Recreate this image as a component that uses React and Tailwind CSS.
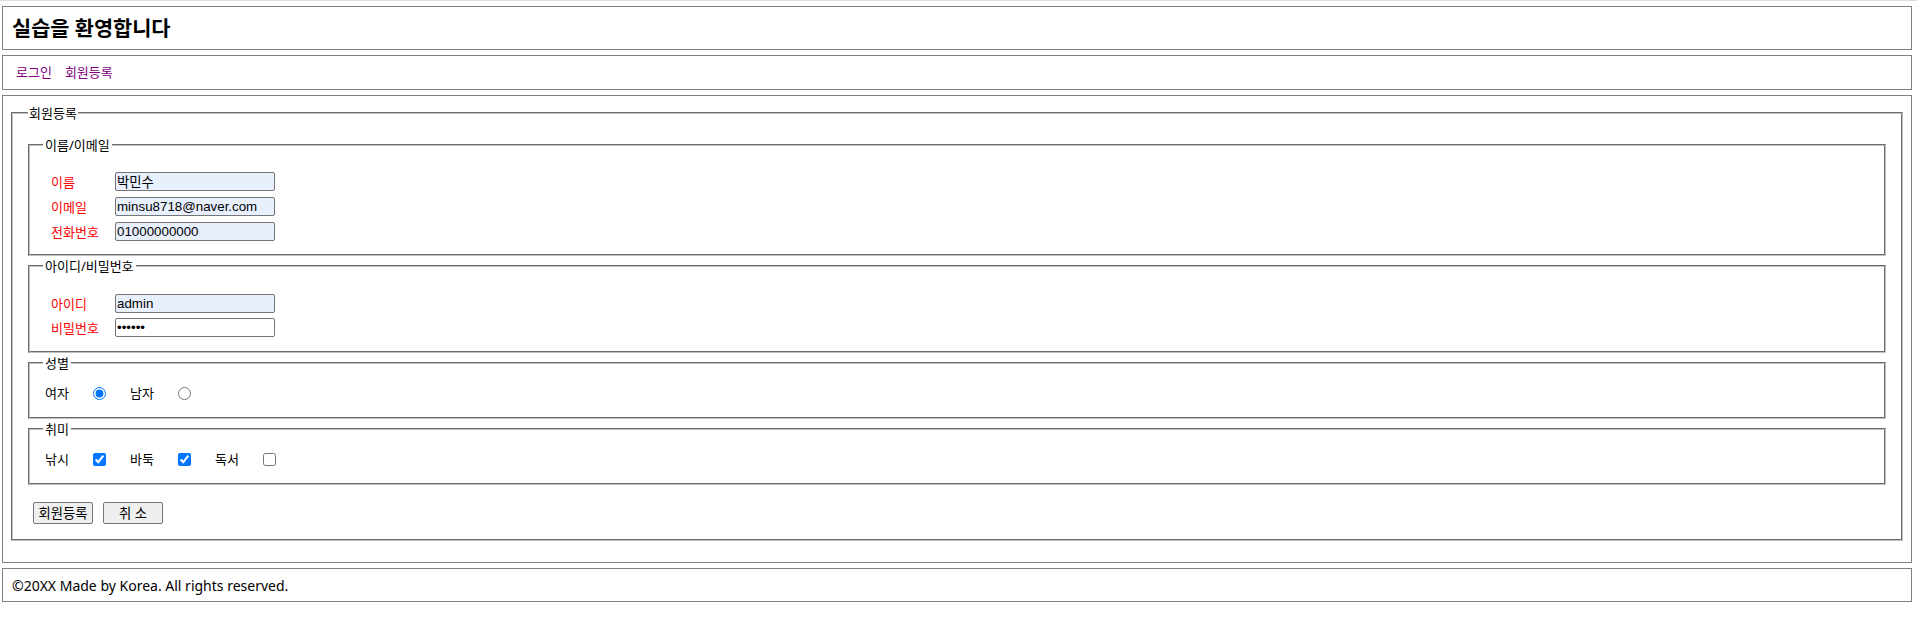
import React from "react";

function TextRow({ label, value, type = "text", filled = true }) {
  return (
    <div className="flex items-center h-[19px]">
      <label className="w-[64px] text-[#ff0000] leading-[16px]">{label}</label>
      <input
        type={type}
        defaultValue={value}
        className={
          "w-[160px] h-[19px] border border-[#767676] rounded-[2px] px-[1px] text-[13.33px] leading-[15px] text-black font-['Liberation_Sans','Noto_Sans_CJK_KR',sans-serif] outline-none " +
          (filled ? "bg-[#e8f0fe]" : "bg-white")
        }
      />
    </div>
  );
}

function Choice({ label, type, checked, name }) {
  return (
    <div className="flex items-center w-[85px]">
      <span className="w-[48px] leading-[16px]">{label}</span>
      <input
        type={type}
        name={name}
        defaultChecked={checked}
        className="m-0 w-[13px] h-[13px]"
      />
    </div>
  );
}

export default function App() {
  return (
    <div className="min-h-[632px] bg-white border-t border-[#dcdcdc] pt-[5px] pl-[2px] pr-[5px] text-[13px] text-black font-['Noto_Sans','Noto_Sans_CJK_KR',sans-serif]">
      <div className="flex flex-col gap-[5px]">
        <header className="h-[44px] border border-[#808080] flex items-center pl-[9px]">
          <h1 className="text-[20.8px] font-bold leading-none">실습을 환영합니다</h1>
        </header>

        <nav className="h-[35px] border border-[#808080] flex items-center pl-[13px] gap-[13px] text-[#800080]">
          <a href="#">로그인</a>
          <a href="#">회원등록</a>
        </nav>

        <main className="border border-[#808080] px-[8px] pt-[9px] pb-[21px]">
          <form onSubmit={(e) => e.preventDefault()}>
            <fieldset className="border-2 [border-style:groove] border-[#c0c0c0] px-[15px] pt-[16px] pb-[15px]">
              <legend className="px-[1px] leading-[16px]">회원등록</legend>

              <div className="flex flex-col gap-[2px]">
                <fieldset className="border-2 [border-style:groove] border-[#c0c0c0] px-[13px] pt-[19px] pb-[13px]">
                  <legend className="px-[2px] leading-[16px]">이름/이메일</legend>
                  <div className="pl-[8px] flex flex-col gap-[6px]">
                    <TextRow label="이름" value="박민수" />
                    <TextRow label="이메일" value="minsu8718@naver.com" />
                    <TextRow label="전화번호" value="01000000000" />
                  </div>
                </fieldset>

                <fieldset className="border-2 [border-style:groove] border-[#c0c0c0] px-[13px] pt-[20px] pb-[14px]">
                  <legend className="px-[2px] leading-[16px]">아이디/비밀번호</legend>
                  <div className="pl-[8px] flex flex-col gap-[5px]">
                    <TextRow label="아이디" value="admin" />
                    <TextRow label="비밀번호" value="123456" type="password" filled={false} />
                  </div>
                </fieldset>

                <fieldset className="border-2 [border-style:groove] border-[#c0c0c0] px-[13px] pt-[14px] pb-[16px]">
                  <legend className="px-[2px] leading-[16px]">성별</legend>
                  <div className="pl-[2px] flex items-center h-[16px]">
                    <Choice label="여자" type="radio" name="gender" checked />
                    <Choice label="남자" type="radio" name="gender" />
                  </div>
                </fieldset>

                <fieldset className="border-2 [border-style:groove] border-[#c0c0c0] px-[13px] pt-[14px] pb-[16px]">
                  <legend className="px-[2px] leading-[16px]">취미</legend>
                  <div className="pl-[2px] flex items-center h-[16px]">
                    <Choice label="낚시" type="checkbox" checked />
                    <Choice label="바둑" type="checkbox" checked />
                    <Choice label="독서" type="checkbox" />
                  </div>
                </fieldset>
              </div>

              <div className="mt-[17px] ml-[5px] flex gap-[10px]">
                <button
                  type="submit"
                  className="w-[60px] h-[22px] px-0 border border-[#767676] rounded-[2px] bg-[#efefef] text-[13.33px] leading-[16px] text-black"
                >
                  회원등록
                </button>
                <button
                  type="button"
                  className="w-[60px] h-[22px] px-0 border border-[#767676] rounded-[2px] bg-[#efefef] text-[13.33px] leading-[16px] text-black"
                >
                  취 소
                </button>
              </div>
            </fieldset>
          </form>
        </main>

        <footer className="h-[34px] border border-[#808080] flex items-center pl-[9px] text-[14px]">
          ©20XX Made by Korea. All rights reserved.
        </footer>
      </div>
    </div>
  );
}
